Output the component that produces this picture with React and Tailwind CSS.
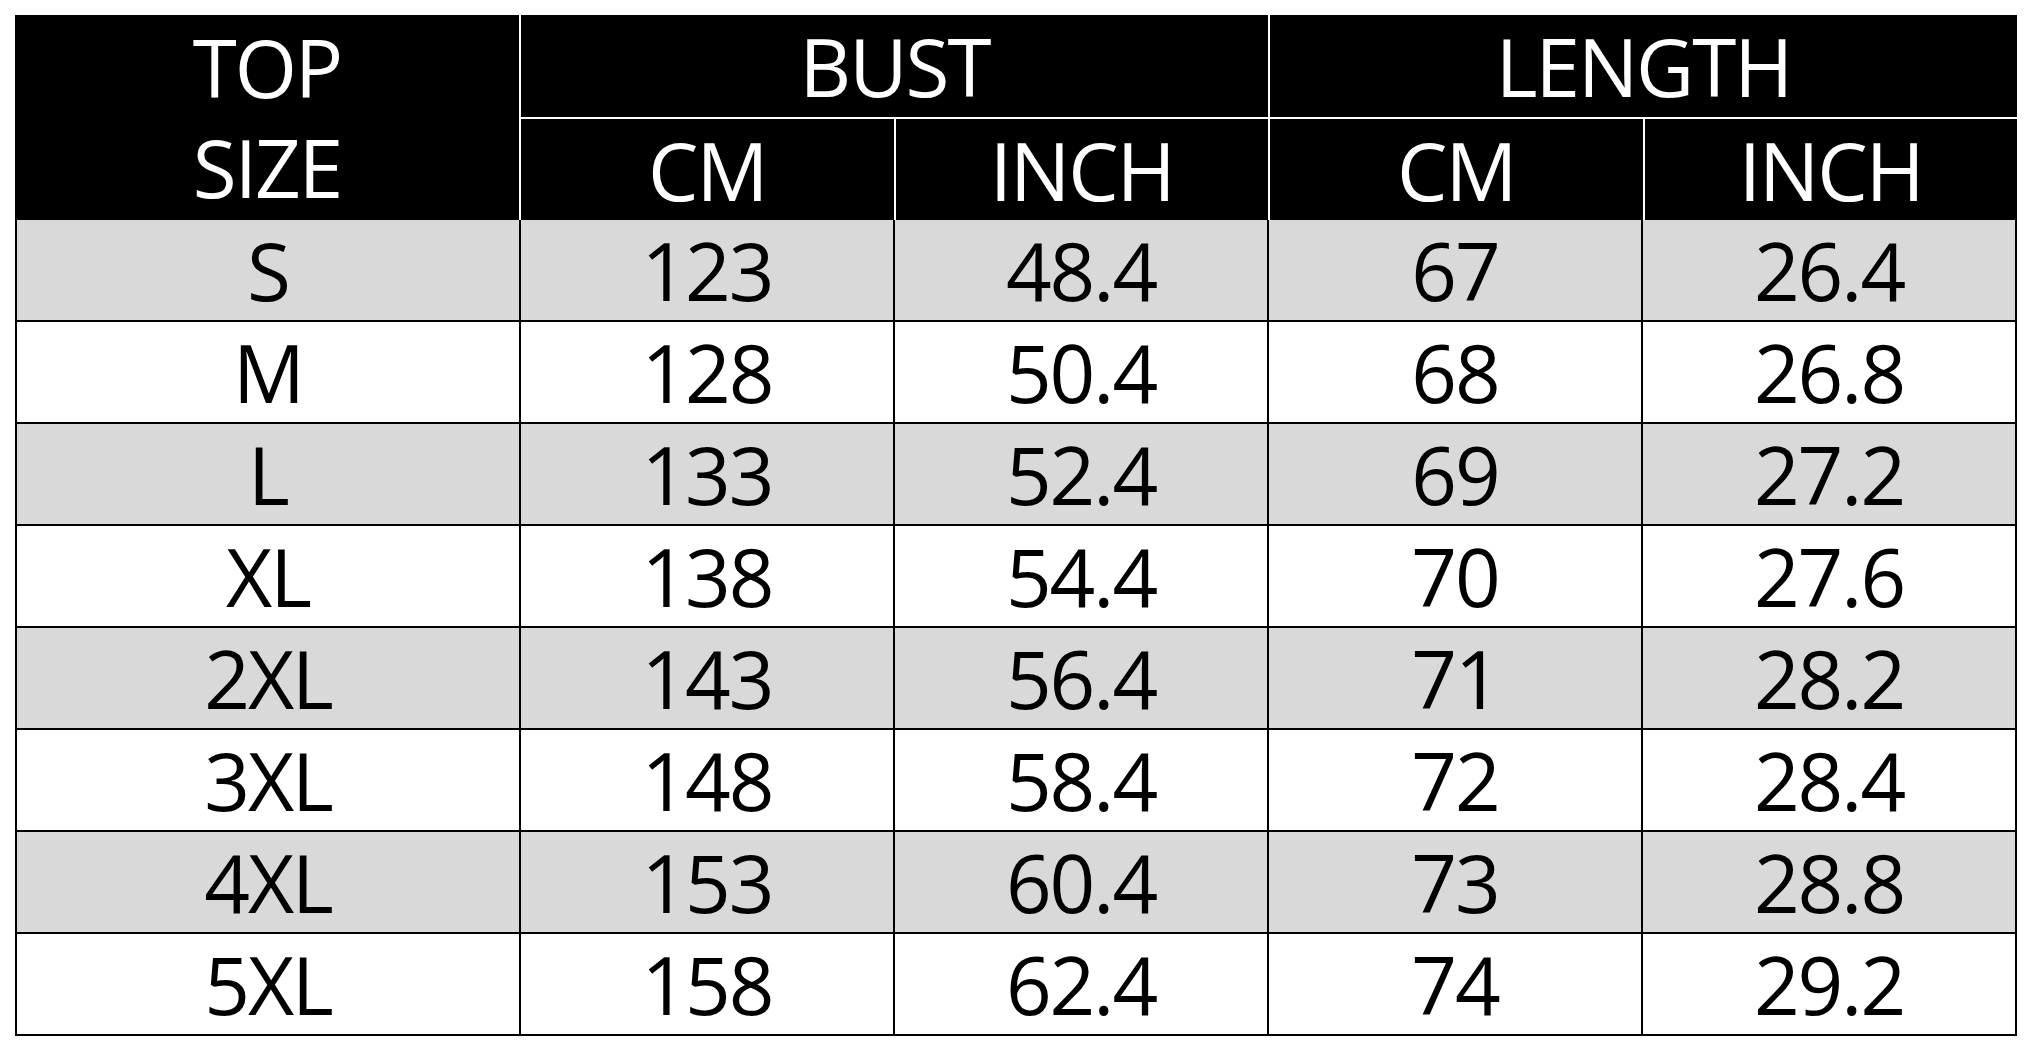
const rows = [
    { size: 'S', bustCm: '123', bustIn: '48.4', lenCm: '67', lenIn: '26.4' },
    { size: 'M', bustCm: '128', bustIn: '50.4', lenCm: '68', lenIn: '26.8' },
    { size: 'L', bustCm: '133', bustIn: '52.4', lenCm: '69', lenIn: '27.2' },
    { size: 'XL', bustCm: '138', bustIn: '54.4', lenCm: '70', lenIn: '27.6' },
    { size: '2XL', bustCm: '143', bustIn: '56.4', lenCm: '71', lenIn: '28.2' },
    { size: '3XL', bustCm: '148', bustIn: '58.4', lenCm: '72', lenIn: '28.4' },
    { size: '4XL', bustCm: '153', bustIn: '60.4', lenCm: '73', lenIn: '28.8' },
    { size: '5XL', bustCm: '158', bustIn: '62.4', lenCm: '74', lenIn: '29.2' },
];

const headCell = 'bg-black text-white flex items-center justify-center';

export default function App() {
    return (
        <div className="min-h-screen bg-white pt-[15px] pl-[15px] font-['Open_Sans',_'Noto_Sans',_sans-serif] text-[80px] leading-none tracking-[-2px]">
            <div className="w-[2002px]">
                {/* Header */}
                <div className="grid grid-cols-[504px_1fr_1fr_1fr_1fr] grid-rows-[102px_101px] gap-[2px] bg-white">
                    <div className={`${headCell} row-span-2 flex-col gap-[20px] pb-[2px]`}>
                        <span>TOP</span>
                        <span>SIZE</span>
                    </div>
                    <div className={`${headCell} col-span-2`}>BUST</div>
                    <div className={`${headCell} col-span-2`}>LENGTH</div>
                    <div className={headCell}>CM</div>
                    <div className={headCell}>INCH</div>
                    <div className={headCell}>CM</div>
                    <div className={headCell}>INCH</div>
                </div>

                {/* Body */}
                <div className="grid grid-cols-[502px_1fr_1fr_1fr_1fr] auto-rows-[100px] gap-[2px] bg-black border-x-2 border-b-2 border-black text-black">
                    {rows.map((r, i) => {
                        const bg = i % 2 === 0 ? 'bg-[#d9d9d9]' : 'bg-white';
                        return [r.size, r.bustCm, r.bustIn, r.lenCm, r.lenIn].map((v, j) => (
                            <div key={`${i}-${j}`} className={`${bg} flex items-center justify-center`}>
                                {v}
                            </div>
                        ));
                    })}
                </div>
            </div>
        </div>
    );
}
